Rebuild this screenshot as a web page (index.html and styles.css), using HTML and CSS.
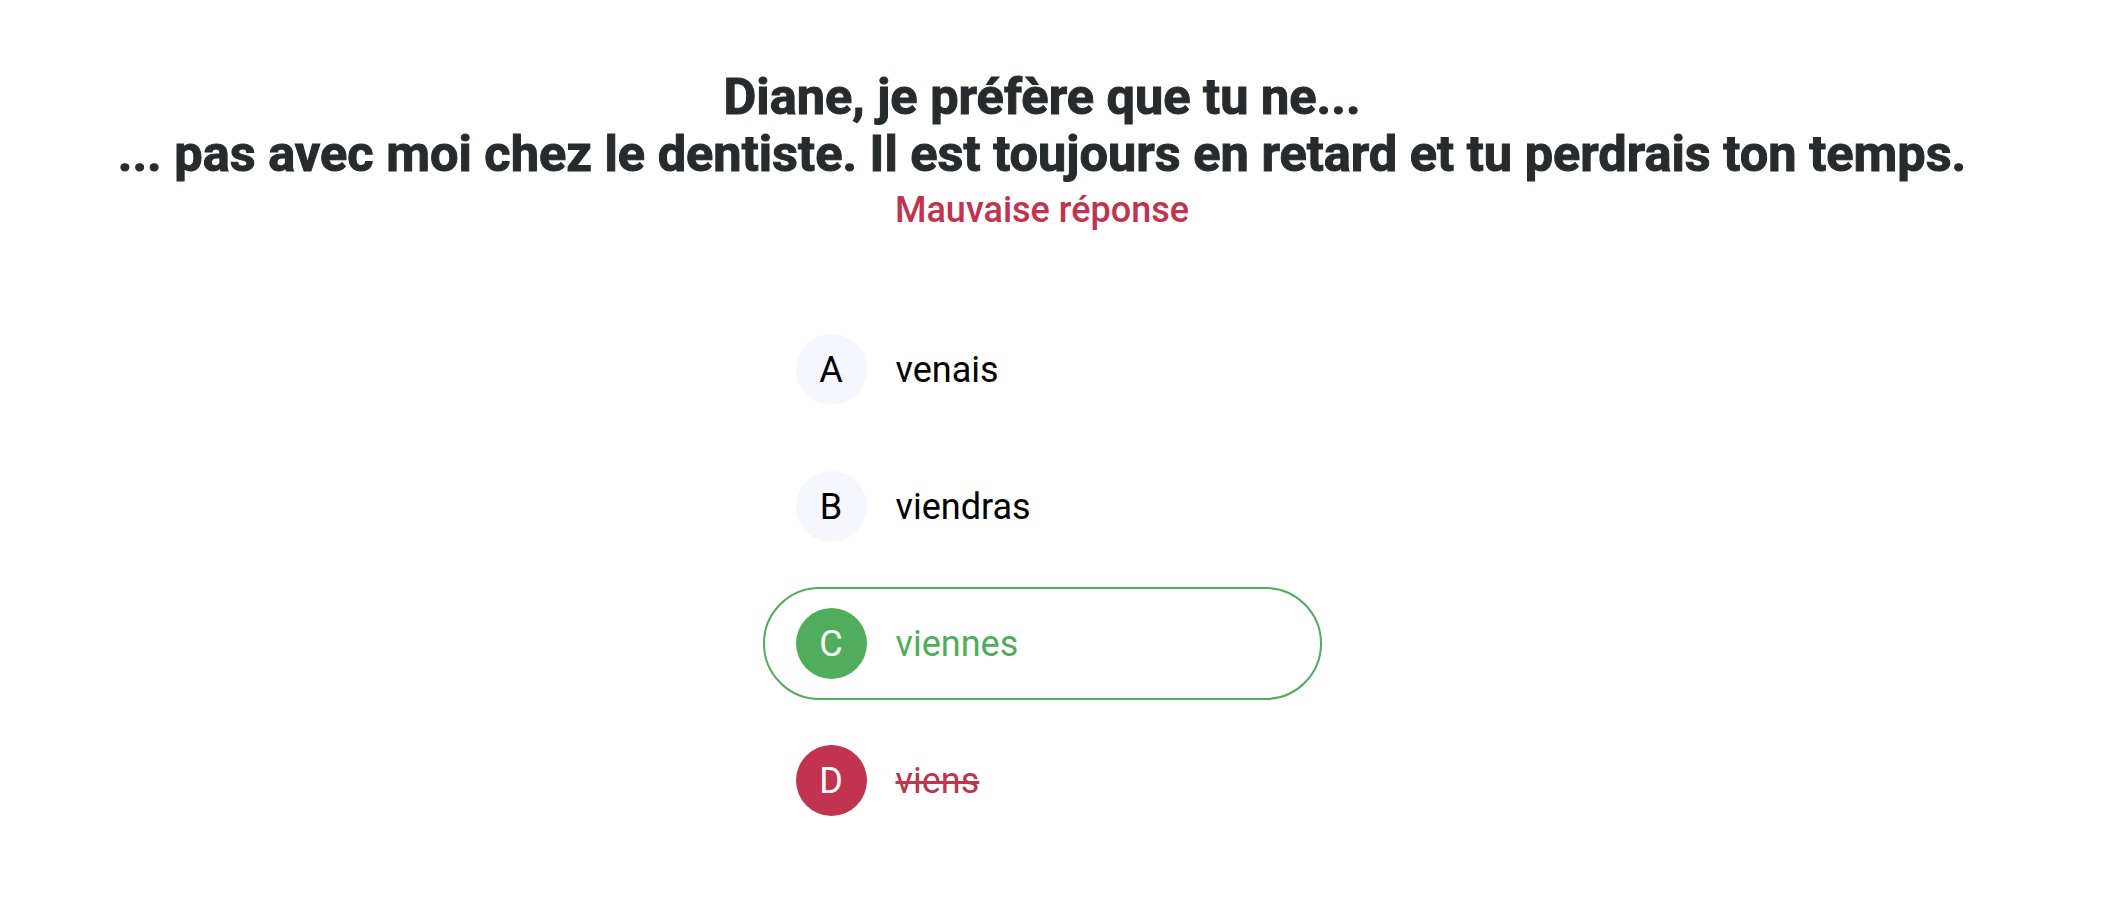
FILE: index.html
```html
<!DOCTYPE html>
<html lang="fr">
<head>
<meta charset="utf-8">
<title>Quiz</title>
<link rel="stylesheet" href="styles.css">
</head>
<body>
<main class="quiz">
  <h1 class="question">Diane, je préfère que tu ne...<br>... pas avec moi chez le dentiste. Il est toujours en retard et tu perdrais ton temps.</h1>
  <p class="feedback">Mauvaise réponse</p>
  <ul class="options">
    <li class="option"><span class="badge">A</span><span class="label">venais</span></li>
    <li class="option"><span class="badge">B</span><span class="label">viendras</span></li>
    <li class="option option--correct"><span class="badge">C</span><span class="label">viennes</span></li>
    <li class="option option--wrong"><span class="badge">D</span><span class="label">viens</span></li>
  </ul>
</main>
</body>
</html>
```
FILE: styles.css
```css
html, body {
  margin: 0;
  padding: 0;
  background: #ffffff;
}

body {
  font-family: Roboto, "Liberation Sans", Arial, sans-serif;
  color: #000;
}

.quiz {
  display: flex;
  flex-direction: column;
  align-items: center;
  padding: 68px 24px 0 0;
}

.question {
  margin: 0;
  font-size: 50.5px;
  line-height: 57px;
  font-weight: 700;
  color: #262b2d;
  text-align: center;
  -webkit-text-stroke: 1px #262b2d;
}

.feedback {
  margin: 7px 0 0 0;
  font-size: 36px;
  line-height: 42px;
  font-weight: 500;
  color: #c1334f;
}

.options {
  list-style: none;
  margin: 82px 0 0 0;
  padding: 0;
  width: 559px;
  display: flex;
  flex-direction: column;
  gap: 24px;
}

.option {
  display: flex;
  align-items: center;
  gap: 29px;
  padding: 19px 31px;
  border: 2px solid transparent;
  border-radius: 60px;
  font-size: 36px;
}

.badge {
  flex: none;
  width: 71px;
  height: 71px;
  border-radius: 50%;
  background: #f5f6fe;
  display: flex;
  align-items: center;
  justify-content: center;
  color: #000;
  font-size: 36px;
}

.label {
  color: #000;
}

.option--correct {
  border-color: #4fad5b;
}

.option--correct .badge {
  background: #4fad5b;
  color: #fff;
}

.option--correct .label {
  color: #4fad5b;
}

.option--wrong .badge {
  background: #c1334f;
  color: #fff;
}

.option--wrong .label {
  color: #c1334f;
  text-decoration: line-through;
  text-decoration-thickness: 3px;
}
```
